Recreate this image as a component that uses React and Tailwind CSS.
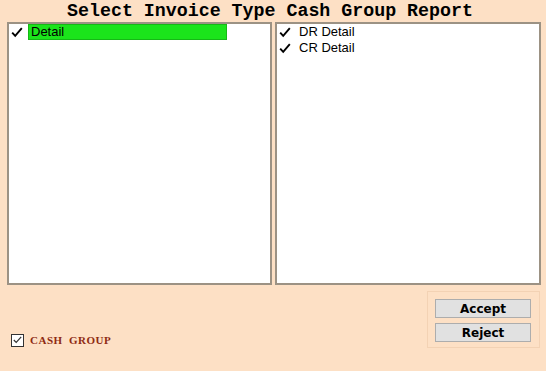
import React from "react";

const Check = () => (
  <svg width="12" height="11" viewBox="0 0 12 11" className="shrink-0">
    <path d="M1.2 5.6 L4.2 8.8 L10.8 1.2" fill="none" stroke="#000" strokeWidth="1.9" />
  </svg>
);

const ListRow = ({ label, selected }) => (
  <div className="flex items-center h-[16px]">
    <div className="w-[19px] flex pl-[2px]">
      <Check />
    </div>
    <div
      className={
        selected
          ? "w-[199px] h-[16px] bg-[#1be41b] border border-[#16b816] pl-[2px] leading-[14px]"
          : "pl-[3px] leading-[16px]"
      }
    >
      {label}
    </div>
  </div>
);

const App = () => {
  const leftItems = [{ id: 1, label: "Detail", selected: true }];
  const rightItems = [
    { id: 1, label: "DR Detail" },
    { id: 2, label: "CR Detail" },
  ];

  return (
    <div className="w-[546px] h-[371px] bg-[#fde0c5] flex flex-col overflow-hidden">
      <div className="h-[22px] flex justify-center items-start">
        <h1 className="font-['Liberation_Mono',monospace] font-bold text-[18.3px] leading-[20px] text-black pt-[1px] -ml-[6px]">
          Select Invoice Type Cash Group Report
        </h1>
      </div>

      <div className="flex gap-[3px] pl-[7px] h-[263px] font-['Liberation_Sans',Arial,sans-serif] text-[13px] text-black">
        <div className="w-[265px] h-full bg-white border-2 border-[#9c9284]">
          {leftItems.map((item) => (
            <ListRow key={item.id} label={item.label} selected={item.selected} />
          ))}
        </div>
        <div className="w-[266px] h-full bg-white border-2 border-[#9c9284]">
          {rightItems.map((item) => (
            <ListRow key={item.id} label={item.label} />
          ))}
        </div>
      </div>

      <div className="flex justify-between items-start">
        <label className="flex items-center gap-[6px] pl-[11px] mt-[47px]">
          <span className="w-[13px] h-[13px] border border-[#333] bg-white flex items-center justify-center">
            <svg width="9" height="8" viewBox="0 0 9 8">
              <path d="M0.8 4 L3.2 6.4 L8.2 0.8" fill="none" stroke="#333" strokeWidth="1.2" />
            </svg>
          </span>
          <span className="font-['Liberation_Serif',serif] font-bold text-[11px] text-[#8e2a12] tracking-[0.5px] whitespace-pre">
            CASH  GROUP
          </span>
        </label>

        <div className="mt-[6px] mr-[6px] w-[113px] h-[57px] border border-[#f3d2b4] flex flex-col gap-[5px] pt-[7px] pl-[7px] font-['DejaVu_Sans',Tahoma,sans-serif] font-bold text-[12px]">
          <button className="w-[96px] h-[19px] bg-[#e1e1e1] border border-[#adadad] leading-[16px] text-black">
            Accept
          </button>
          <button className="w-[96px] h-[19px] bg-[#e1e1e1] border border-[#adadad] leading-[16px] text-black">
            Reject
          </button>
        </div>
      </div>
    </div>
  );
};

export default App;
